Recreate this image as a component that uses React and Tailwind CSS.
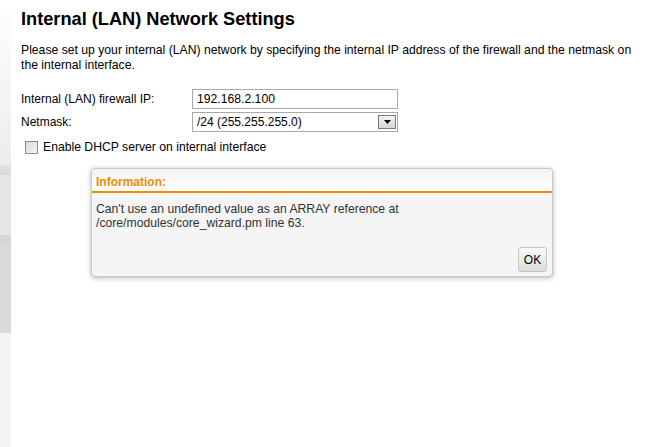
export default function App() {
  return (
    <div className="flex h-[447px] w-[652px] overflow-hidden bg-white font-['Liberation_Sans',Arial,sans-serif] text-black">
      <div className="flex w-[11px] shrink-0 flex-col">
        <div className="h-[165px] bg-gradient-to-b from-white to-[#ececec]" />
        <div className="h-[10px] bg-gradient-to-b from-[#e4e4e4] to-[#d9d9d9]" />
        <div className="h-[60px] bg-[#e6e6e6]" />
        <div className="h-[8px] bg-[#d6d6d6]" />
        <div className="h-[90px] bg-[#d9d9d9]" />
        <div className="flex-1 bg-[#f3f3f3]" />
      </div>
      <div className="flex-1 pl-[10px] pt-[8px]">
        <h1 className="text-[18.2px] font-bold leading-[22px]">Internal (LAN) Network Settings</h1>
        <p className="mt-[13px] w-[625px] text-[12.2px] leading-[15px]">
          Please set up your internal (LAN) network by specifying the internal IP address of the firewall and the netmask on the internal interface.
        </p>
        <div className="mt-[16px] flex flex-col gap-[3px] text-[12px]">
          <div className="flex items-center">
            <label className="w-[171px]">Internal (LAN) firewall IP:</label>
            <div className="flex h-[20px] w-[206px] items-center border border-[#a9a9a9] px-[4px] text-[12.2px]">192.168.2.100</div>
          </div>
          <div className="flex items-center">
            <label className="w-[171px]">Netmask:</label>
            <div className="flex h-[20px] w-[206px] items-center justify-between border border-[#a9a9a9] pl-[4px] pr-[1px]">
              <span>/24 (255.255.255.0)</span>
              <div className="flex h-[14px] w-[18px] items-center justify-center border border-[#7a7a7a] bg-gradient-to-b from-[#f4f4f4] to-[#d6d6d6]">
                <svg width="7" height="4" viewBox="0 0 7 4"><path d="M0 0h7L3.5 4z" fill="#000" /></svg>
              </div>
            </div>
          </div>
        </div>
        <label className="ml-[4px] mt-[6px] flex items-center gap-[5px] text-[12.2px]">
          <span className="h-[13px] w-[13px] border border-[#8a8a8a] bg-gradient-to-br from-[#d8d8d8] to-[#f6f6f6]" />
          Enable DHCP server on internal interface
        </label>
        <div className="ml-[70px] mt-[12px] w-[462px] overflow-hidden rounded-[4px] border border-[#c8c8c8] bg-[#f5f5f5] shadow-[0_1px_5px_rgba(0,0,0,0.3)]">
          <div className="h-[24px] border-b-2 border-[#f08c00] bg-gradient-to-b from-[#f2f2f2] to-white px-[4px] pt-[4px] text-[12px] font-bold text-[#f08c00]">
            Information:
          </div>
          <div className="px-[4px] pt-[9px] text-[12.2px] leading-[14px] text-[#333]">
            Can't use an undefined value as an ARRAY reference at
            <br />
            /core/modules/core_wizard.pm line 63.
          </div>
          <div className="flex justify-end px-[5px] pb-[4px] pt-[17px]">
            <button className="h-[25px] w-[29px] rounded-[3px] border border-[#c5c5c5] bg-gradient-to-b from-[#fafafa] to-[#dcdcdc] text-[12px] text-black">OK</button>
          </div>
        </div>
      </div>
    </div>
  );
}
